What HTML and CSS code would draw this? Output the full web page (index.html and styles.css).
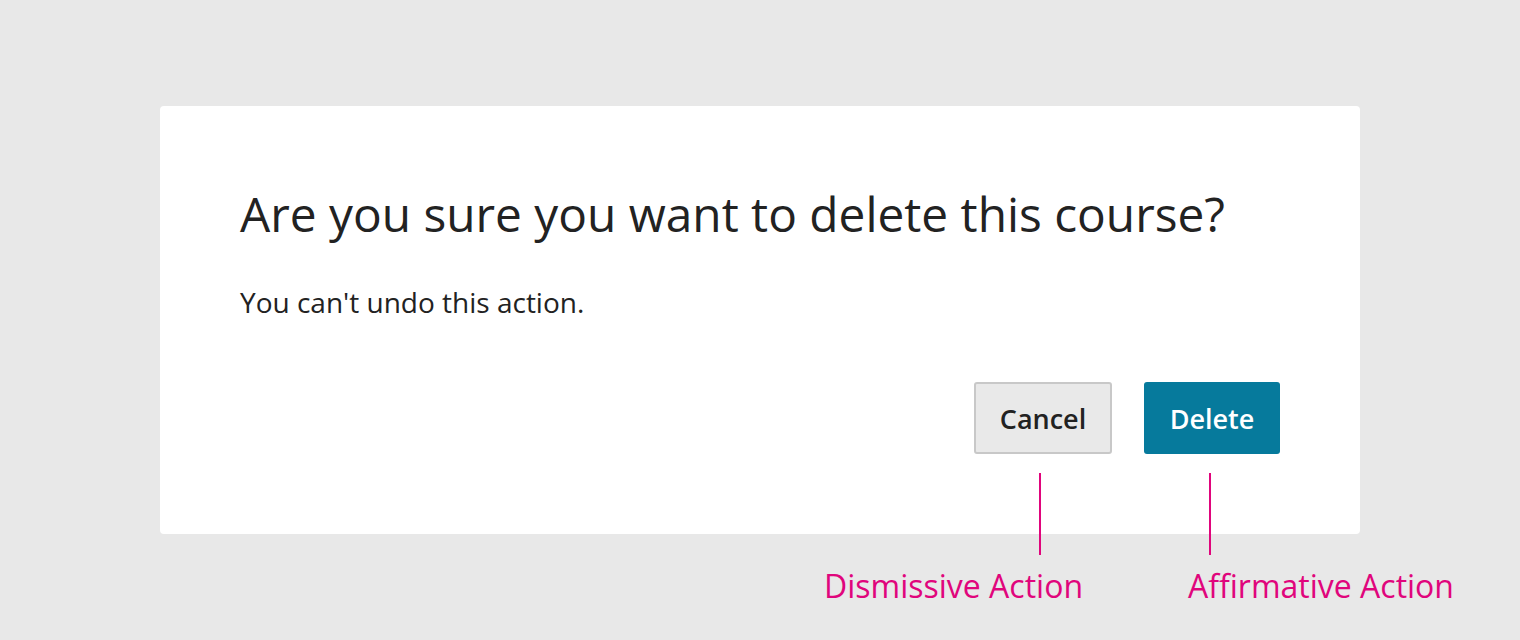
FILE: index.html
```html
<!DOCTYPE html>
<html lang="en">
<head>
<meta charset="utf-8">
<title>Delete course dialog</title>
<link rel="stylesheet" href="styles.css">
</head>
<body>
<div class="stage">
  <div class="dialog">
    <h1 class="dialog-title">Are you sure you want to delete this course?</h1>
    <p class="dialog-body">You can't undo this action.</p>
    <div class="dialog-actions">
      <button class="btn btn-secondary">Cancel</button>
      <button class="btn btn-primary">Delete</button>
    </div>
  </div>
  <span class="callout-line line-dismiss"></span>
  <span class="callout-line line-affirm"></span>
  <span class="callout-label label-dismiss">Dismissive Action</span>
  <span class="callout-label label-affirm">Affirmative Action</span>
</div>
</body>
</html>
```

FILE: styles.css
```css
html, body {
  margin: 0;
  padding: 0;
  background: #e8e8e8;
  font-family: "Open Sans", "DejaVu Sans", sans-serif;
  color: #222;
}
.stage {
  position: relative;
  width: 1520px;
  height: 640px;
  padding-top: 106px;
  box-sizing: border-box;
}
.dialog {
  margin-left: 160px;
  width: 1200px;
  height: 428px;
  box-sizing: border-box;
  background: #fff;
  border-radius: 4px;
  padding: 80px 80px 0 80px;
  display: flex;
  flex-direction: column;
}
.dialog-title {
  margin: 0;
  font-size: 47.8px;
  font-weight: 400;
  line-height: 56px;
  color: #222;
}
.dialog-body {
  margin: 42px 0 0 0;
  font-size: 28px;
  line-height: 36px;
  color: #222;
}
.dialog-actions {
  margin-top: 62px;
  display: flex;
  justify-content: flex-end;
  gap: 32px;
}
.btn {
  height: 72px;
  font-family: "Open Sans", "DejaVu Sans", sans-serif;
  font-size: 27px;
  font-weight: 600;
  border-radius: 3px;
  box-sizing: border-box;
  padding: 0;
}
.btn-secondary {
  width: 138px;
  background: #e9e9e9;
  border: 2px solid #c8c8c8;
  color: #222;
}
.btn-primary {
  width: 136px;
  background: #067a9c;
  border: none;
  color: #fff;
}
.callout-line {
  position: absolute;
  top: 473px;
  width: 2px;
  height: 82px;
  background: #e0057c;
}
.line-dismiss { left: 1039px; }
.line-affirm { left: 1209px; }
.callout-label {
  position: absolute;
  top: 564px;
  font-size: 32px;
  line-height: 44px;
  color: #e0057c;
  white-space: nowrap;
}
.label-dismiss { left: 824px; }
.label-affirm { left: 1188px; }
```
